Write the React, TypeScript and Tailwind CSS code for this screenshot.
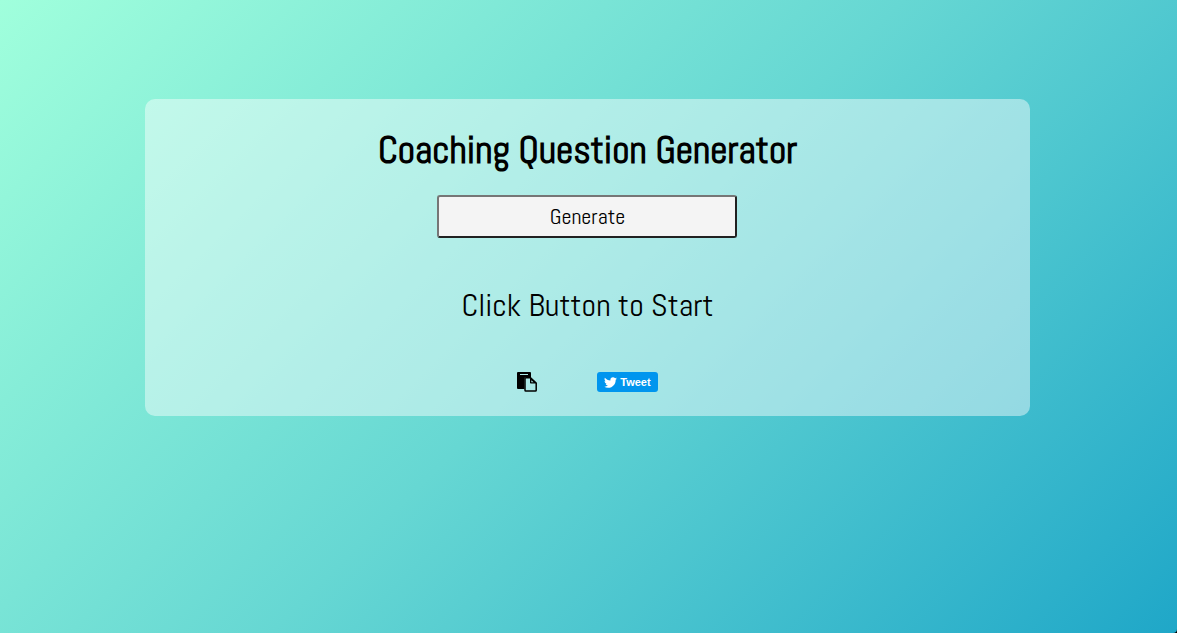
import { useState } from "react";

const QUESTIONS = [
  "What would you like to achieve?",
  "What is holding you back?",
  "What is the first step you can take?",
  "How will you know you have succeeded?",
];

function PasteIcon() {
  return (
    <svg width="20" height="20" viewBox="0 0 20 20" aria-hidden="true">
      <path
        fillRule="evenodd"
        d="M1 0h12q1 0 1 1v4H9Q7.500 5 7.500 6.500V17H1q-1 0-1-1V1Q0 0 1 0ZM3 2v1h8V2Z"
      />
      <path
        d="M8.800 5.800h4.700l5.700 5.200v7.200q0 .8-.8.800H8.800q-.8 0-.8-.8V6.600q0-.8.8-.8Z"
        fill="none"
        stroke="currentColor"
        strokeWidth="1.500"
      />
      <path d="M13 5.500 19.500 11.500H13.800q-.8 0-.8-.8ZM14.300 8.200v2.100h2.300Z" fillRule="evenodd" />
    </svg>
  );
}

function BirdIcon() {
  return (
    <svg width="13" height="13" viewBox="0 0 24 24" fill="currentColor" aria-hidden="true">
      <path d="M23.953 4.570a10 10 0 0 1-2.825.775 4.958 4.958 0 0 0 2.163-2.723 9.990 9.990 0 0 1-3.127 1.184 4.920 4.920 0 0 0-8.384 4.482C7.690 8.095 4.067 6.130 1.640 3.162a4.822 4.822 0 0 0-.666 2.475c0 1.710.870 3.213 2.188 4.096a4.904 4.904 0 0 1-2.228-.616v.06a4.923 4.923 0 0 0 3.946 4.827 4.996 4.996 0 0 1-2.212.085 4.936 4.936 0 0 0 4.604 3.417A9.867 9.867 0 0 1 0 19.540a13.995 13.995 0 0 0 7.557 2.209c9.053 0 13.998-7.496 13.998-13.985 0-.210 0-.420-.015-.630a9.935 9.935 0 0 0 2.460-2.548Z" />
    </svg>
  );
}

export default function App() {
  const [question, setQuestion] = useState("Click Button to Start");

  const generate = () =>
    setQuestion(QUESTIONS[Math.floor(Math.random() * QUESTIONS.length)]);

  return (
    <div className="min-h-screen bg-black font-[Abel,'Roboto_Condensed','Liberation_Sans_Narrow',sans-serif] text-black">
      <div className="min-h-screen rounded-br bg-[linear-gradient(135deg,#a0ffdc,#66d7d3,#1fa7c8)] pt-[99px] pr-0.5">
        <main className="mx-auto flex w-[75.3%] flex-col items-center rounded-[10px] bg-white/45 px-6 pt-6 pb-6 text-center">
          <h1 className="text-[38px] leading-[54px] font-bold">
            Coaching Question Generator
          </h1>
          <button
            type="button"
            onClick={generate}
            className="mt-[18px] flex h-[43px] w-[300px] cursor-pointer justify-center rounded-[3px] border-2 border-t-[#767676] border-r-[#212121] border-b-[#212121] border-l-[#767676] bg-[#f4f4f4] pt-[3px] text-[22px] leading-8"
          >
            Generate
          </button>
          <p className="mt-[43px] text-[32px] leading-[48px]">{question}</p>
          <div className="mt-[42px] flex h-[21px] items-center gap-[60px]">
            <button
              type="button"
              aria-label="Copy question"
              className="cursor-pointer"
              onClick={() => navigator.clipboard?.writeText(question)}
            >
              <PasteIcon />
            </button>
            <a
              href="https://twitter.com/intent/tweet"
              className="flex h-5 w-[61px] items-center justify-center gap-[3px] self-end rounded-[3px] bg-[#0095ee] font-['Liberation_Sans',sans-serif] text-[11px] leading-5 font-bold text-white"
            >
              <BirdIcon />
              Tweet
            </a>
          </div>
        </main>
      </div>
    </div>
  );
}
